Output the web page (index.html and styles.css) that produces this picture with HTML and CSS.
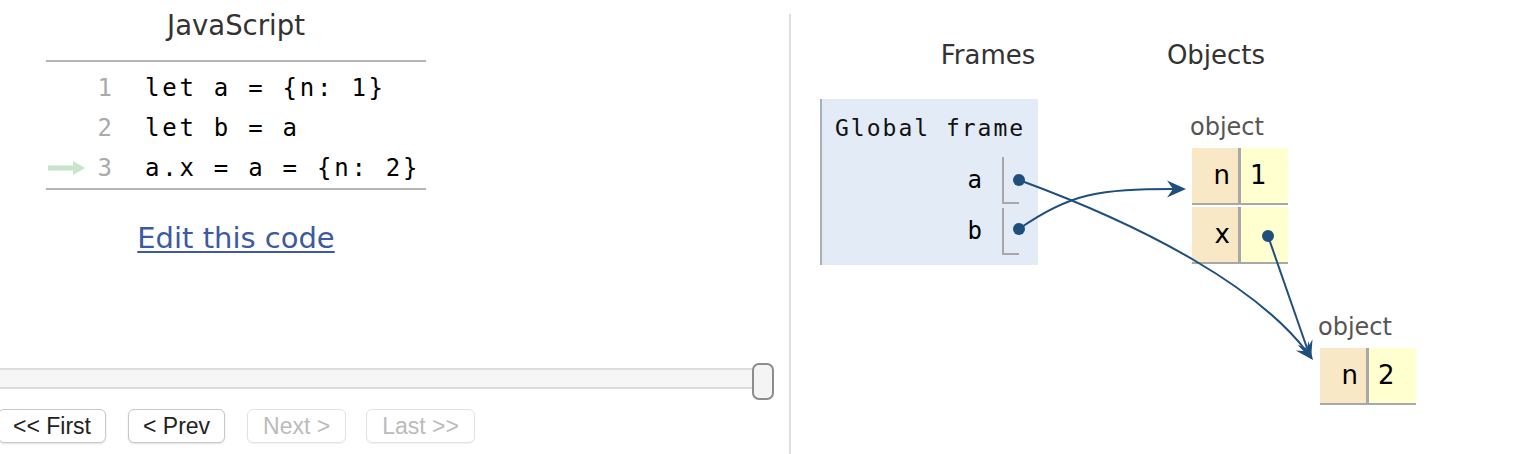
FILE: index.html
```html
<!DOCTYPE html>
<html>
<head>
<meta charset="utf-8">
<link rel="stylesheet" href="styles.css">
</head>
<body>
<div class="page">
  <div class="left">
    <div class="code-wrap">
      <div class="lang">JavaScript</div>
      <div class="code">
        <div class="row"><div class="gutter"><span class="num">1</span></div><div class="src">let a = {n: 1}</div></div>
        <div class="row"><div class="gutter"><span class="num">2</span></div><div class="src">let b = a</div></div>
        <div class="row"><div class="gutter"><svg class="cur" width="38" height="14" viewBox="0 0 38 14"><path d="M0 4.5 H25 V0 L37 7 L25 14 V9.5 H0 Z" fill="#c8e4c9"/></svg><span class="num">3</span></div><div class="src">a.x = a = {n: 2}</div></div>
      </div>
      <div class="edit"><a href="#">Edit this code</a></div>
    </div>
    <div class="slider"><div class="track"></div><div class="thumb"></div></div>
    <div class="nav">
      <button class="btn">&lt;&lt; First</button>
      <button class="btn">&lt; Prev</button>
      <button class="btn off">Next &gt;</button>
      <button class="btn off last">Last &gt;&gt;</button>
    </div>
  </div>
  <div class="right">
    <div class="heads"><div class="head">Frames</div><div class="head">Objects</div></div>
    <div class="frame">
      <div class="ftitle">Global frame</div>
      <div class="vars">
        <div class="vname">a</div><div class="vcell"></div>
        <div class="vname">b</div><div class="vcell"></div>
      </div>
    </div>
    <div class="obj obj1">
      <div class="olabel">object</div>
      <div class="otable">
        <div class="okey">n</div><div class="oval">1</div>
        <div class="okey">x</div><div class="oval"></div>
      </div>
    </div>
    <div class="obj obj2">
      <div class="olabel">object</div>
      <div class="otable">
        <div class="okey">n</div><div class="oval">2</div>
      </div>
    </div>
    <svg class="arrows" width="747" height="440" viewBox="791 14 747 440">
      <g fill="none" stroke="#1f4f7d" stroke-width="2">
        <path d="M1019 180 C1150 228 1258 288 1307 352"/>
        <path d="M1019 229 C1070 193 1100 189 1174 189"/>
        <path d="M1268 236 L1307 348"/>
      </g>
      <g fill="#1f4f7d">
        <circle cx="1019" cy="180" r="6"/>
        <circle cx="1019" cy="229" r="6"/>
        <circle cx="1268" cy="236" r="6"/>
        <path d="M1186 189 L1167 180.5 L1173 189 L1167 197.5 Z"/>
        <path d="M1313 360 L1295.7 350.5 L1306.4 351.2 L1308.5 340.9 Z"/>
        <path d="M1311 359 L1297.5 344.7 L1307.3 348.6 L1312.5 339.3 Z"/>
      </g>
    </svg>
  </div>
</div>
</body>
</html>
```

FILE: styles.css
```css
html, body {
  margin: 0;
  padding: 0;
  background: #fff;
}
body {
  width: 1538px;
  height: 454px;
  overflow: hidden;
  font-family: "DejaVu Sans", Verdana, sans-serif;
  color: #333;
}
.page {
  display: flex;
  height: 454px;
}
.left {
  width: 789px;
  flex: none;
}
.code-wrap {
  margin-left: 46px;
  width: 380px;
}
.lang {
  margin-top: 10px;
  height: 30px;
  line-height: 30px;
  font-size: 27.5px;
  text-align: center;
  color: #333;
}
.code {
  margin-top: 20px;
  border-top: 2px solid #b5b5b5;
  border-bottom: 2px solid #b5b5b5;
  padding: 6px 0 0;
  font-family: "DejaVu Sans Mono", monospace;
  font-size: 24px;
}
.row {
  display: flex;
  align-items: center;
  height: 40px;
}
.gutter {
  width: 66px;
  flex: none;
  display: flex;
  align-items: center;
  justify-content: flex-end;
}
.cur {
  margin-right: 12px;
}
.num {
  color: #aaa;
}
.src {
  margin-left: 33px;
  letter-spacing: 2.75px;
  color: #000;
  white-space: pre;
}
.edit {
  margin-top: 31px;
  text-align: center;
  font-size: 29px;
  line-height: 34px;
}
.edit a {
  color: #3d59a3;
  text-decoration: underline;
  text-decoration-thickness: 2px;
  text-underline-offset: 3px;
}
.slider {
  margin-top: 108px;
  position: relative;
  height: 36px;
  width: 774px;
}
.track {
  position: absolute;
  left: -10px;
  right: 10px;
  top: 5px;
  height: 17px;
  background: #f6f6f6;
  border: 2px solid #dcdcdc;
}
.thumb {
  position: absolute;
  right: 0;
  top: 0;
  width: 18px;
  height: 33px;
  border: 2px solid #8c8c8c;
  border-radius: 7px;
  background: #f4f4f4;
}
.nav {
  margin-top: 10px;
  margin-left: -2px;
  display: flex;
  gap: 22px;
}
.btn {
  font-family: "Liberation Sans", Arial, sans-serif;
  font-size: 23px;
  height: 34px;
  padding: 0 14px;
  background: #fff;
  color: #222;
  border: 1px solid #c8c8c8;
  border-radius: 6px;
  box-shadow: 0 1px 2px rgba(0,0,0,0.12);
}
.btn.off {
  padding: 0 15px;
  color: #bbb;
  border-color: #e2e2e2;
  box-shadow: 0 1px 1px rgba(0,0,0,0.05);
}
.btn.last {
  margin-left: -2px;
}
.right {
  flex: 1;
  position: relative;
  margin-top: 14px;
  border-left: 2px solid #dedede;
}
.heads {
  display: flex;
  padding-top: 26px;
  padding-left: 97px;
  gap: 28px;
}
.head {
  width: 200px;
  text-align: center;
  font-size: 26px;
  line-height: 30px;
  color: #333;
}
.frame {
  position: absolute;
  left: 29px;
  top: 85px;
  width: 216px;
  height: 166px;
  background: #e2ebf6;
  border-left: 2px solid #a9b0b6;
}
.ftitle {
  padding: 14px 0 0 13px;
  height: 30px;
  line-height: 30px;
  font-family: "DejaVu Sans Mono", monospace;
  font-size: 23px;
  letter-spacing: 2px;
  color: #111;
}
.vars {
  margin-top: 14px;
  display: grid;
  grid-template-columns: 160px 17px;
  column-gap: 20px;
  row-gap: 4px;
}
.vname {
  text-align: right;
  font-family: "DejaVu Sans Mono", monospace;
  font-size: 24px;
  line-height: 47px;
  color: #000;
}
.vcell {
  height: 45px;
  border-left: 2px solid #a8a8a8;
  border-bottom: 2px solid #a8a8a8;
}
.obj {
  position: absolute;
}
.obj1 {
  left: 399px;
  top: 99px;
}
.obj2 {
  left: 527px;
  top: 299px;
}
.olabel {
  font-size: 24px;
  line-height: 28px;
  color: #555;
}
.otable {
  margin-top: 7px;
  margin-left: 2px;
  display: grid;
  grid-template-columns: 46px 50px;
  row-gap: 2px;
}
.okey, .oval {
  height: 55px;
  line-height: 55px;
  font-size: 26px;
  color: #000;
  border-bottom: 2px solid #a8a8a8;
}
.okey {
  background: #f8e8c6;
  text-align: right;
  padding-right: 8px;
}
.oval {
  background: #ffffcf;
  border-left: 3px solid #a8a8a8;
  padding-left: 9px;
}
.arrows {
  position: absolute;
  left: 0;
  top: 0;
  pointer-events: none;
}
```
